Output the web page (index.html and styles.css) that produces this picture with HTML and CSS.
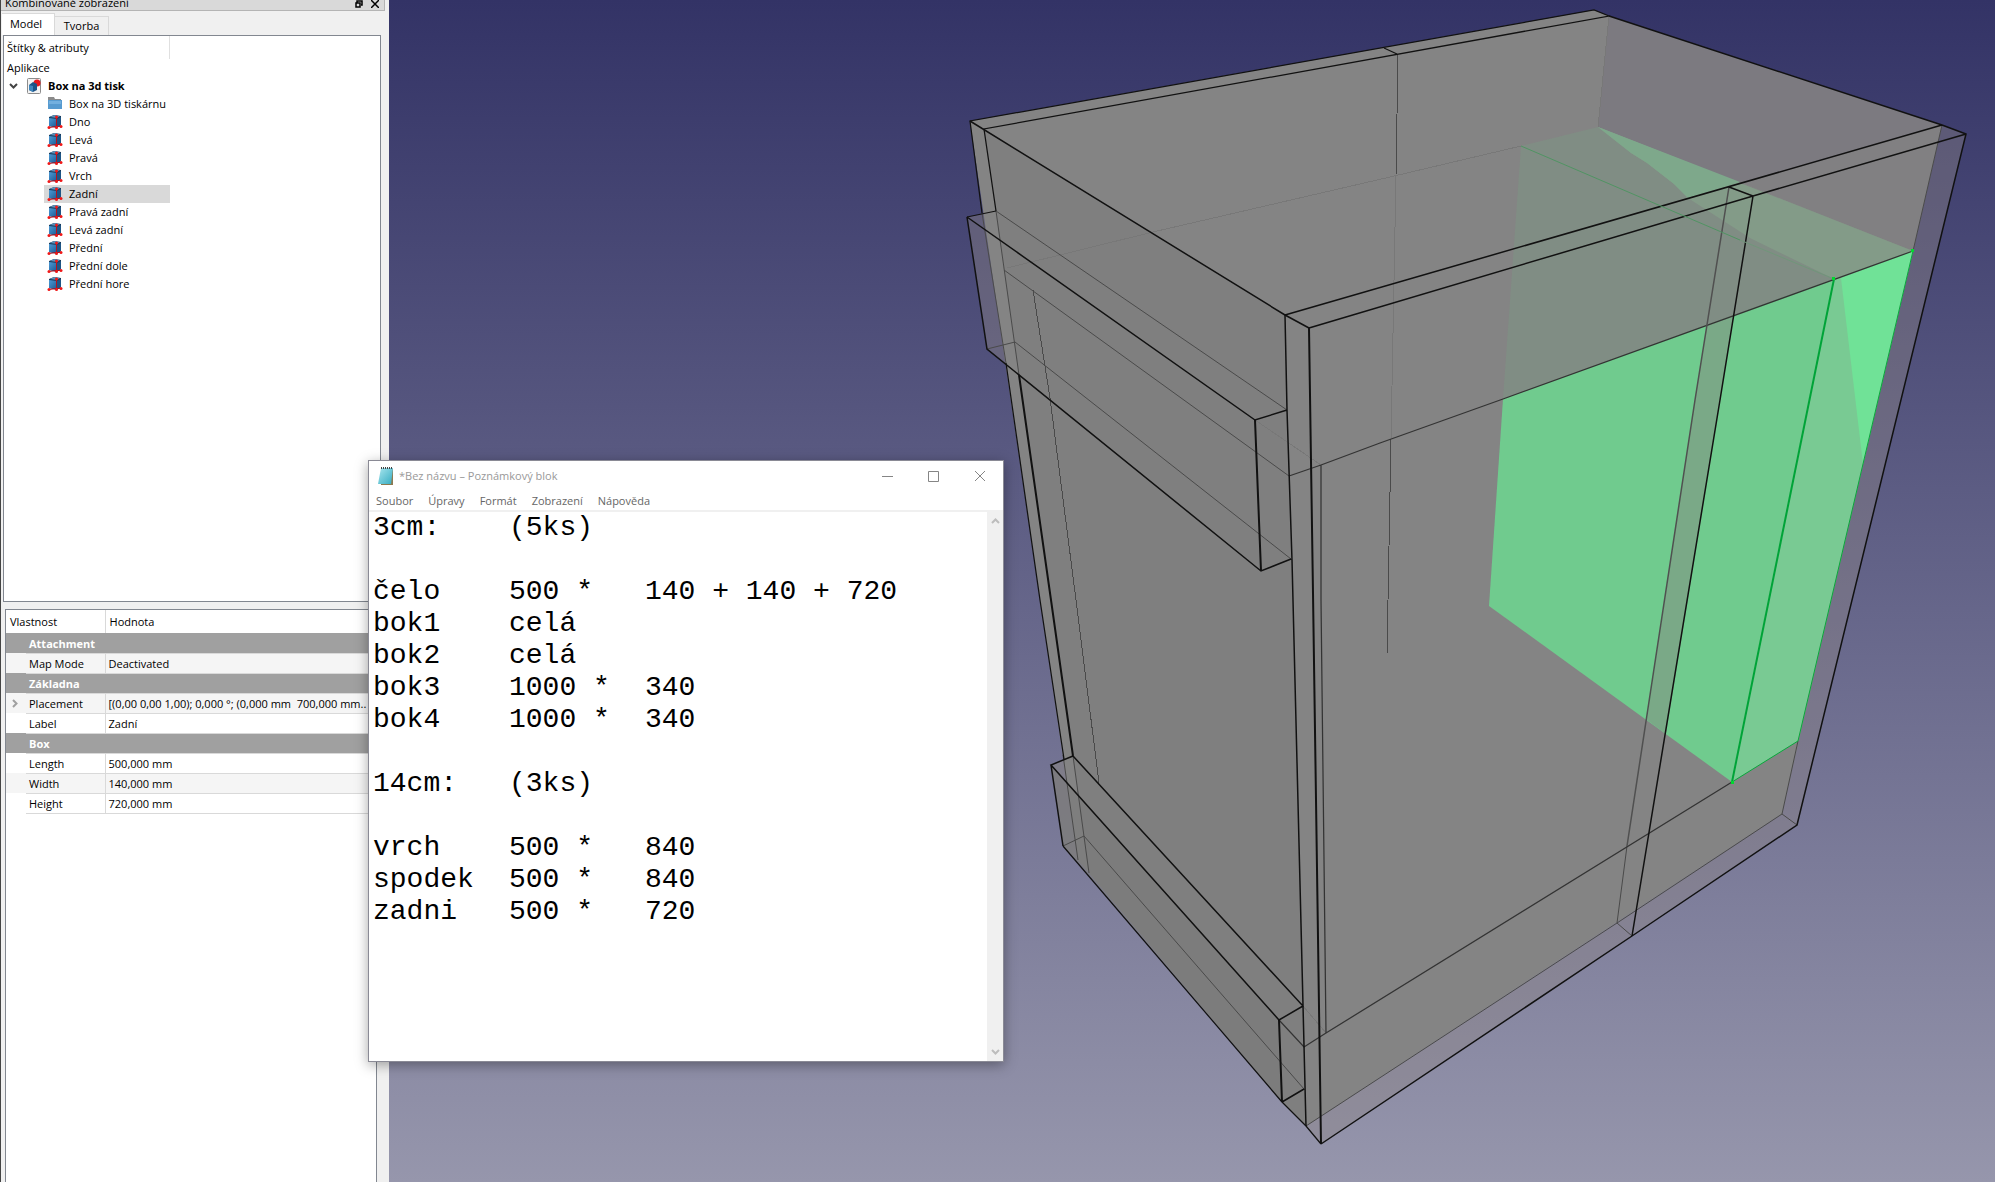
FILE: index.html
```html
<!DOCTYPE html>
<html lang="cs">
<head>
<meta charset="utf-8">
<title>Box na 3d tisk</title>
<link rel="stylesheet" href="styles.css">
</head>
<body>
<svg class="defs" aria-hidden="true">
  <defs>
    <linearGradient id="face" x1="0" y1="0" x2="1" y2="1"><stop offset="0" stop-color="#4c9ad6"/><stop offset="1" stop-color="#1b5a94"/></linearGradient>
    <linearGradient id="pad" x1="0" y1="0" x2="1" y2="1"><stop offset="0" stop-color="#a9e6ee"/><stop offset="1" stop-color="#35acc2"/></linearGradient>
    <symbol id="cube" viewBox="0 0 16 16">
      <path d="M2 3 7 1 14 2 14 11 10 14 2 12Z" fill="#173b5c"/>
      <path d="M2 4 10 5 10 13 2 12Z" fill="url(#face)"/>
      <path d="M3 3 7 1 13 2 10 4Z" fill="#5c8fb8"/>
      <path d="M10 5 14 3 14 11 10 13Z" fill="#1f5585"/>
      <path d="M9.500 3V12.500M2 13.500 9.500 12.500 14 12.500" stroke="#b3121f" stroke-width="1" fill="none"/>
      <g fill="#f01818"><circle cx="9.500" cy="3" r="1.500"/><circle cx="2" cy="13.500" r="1.500"/><circle cx="9.500" cy="13.500" r="1.500"/><circle cx="14" cy="12.500" r="1.500"/></g>
    </symbol>
    <symbol id="folder" viewBox="0 0 16 16">
      <path d="M1 1H7L8 3H14V7H1Z" fill="#8b8b8b"/>
      <path d="M1 4H15V13H1Z" fill="#579bd0"/><path d="M2 5H14V8H2Z" fill="#73b0df"/>
    </symbol>
    <symbol id="doc" viewBox="0 0 16 16">
      <rect x="1.500" y=".5" width="13" height="15" rx="1" fill="#f3f3f3" stroke="#8c8c8c"/>
      <circle cx="11" cy="5" r="3.500" fill="#e8161d"/>
      <path d="M3 7 7 4 11 6V12L7 14 3 12Z" fill="#1c5387"/><path d="M3 7 7 8V14L3 12Z" fill="#3f86bd"/>
    </symbol>
  </defs>
</svg>
<div class="app">
  <aside class="dock">
    <header class="dock-title">
      <span>Kombinované zobrazení</span>
      <button class="mini" aria-label="Plovoucí"><svg viewBox="0 0 8 8"><path d="M2 3V1H7V5H6M1 3H5V7H1Z" fill="none" stroke="#000" stroke-width="1.500"/></svg></button>
      <button class="mini" aria-label="Zavřít panel"><svg viewBox="0 0 8 8"><path d="M0 0 8 8M8 0 0 8" stroke="#000" stroke-width="1.500"/></svg></button>
    </header>
    <nav class="tabs"><button class="tab active">Model</button><button class="tab">Tvorba</button></nav>
    <section class="tree">
      <div class="tree-head">Štítky &amp; atributy</div>
      <div class="tree-app">Aplikace</div>
      <div class="root"><svg class="chevron" viewBox="0 0 9 6"><path d="M1 1 4.500 4.500 8 1" fill="none" stroke="#444" stroke-width="2"/></svg><svg class="icon"><use href="#doc"/></svg><b>Box na 3d tisk</b></div>
      <ul class="items">
        <li><svg class="icon"><use href="#folder"/></svg>Box na 3D tiskárnu</li>
        <li><svg class="icon"><use href="#cube"/></svg>Dno</li>
        <li><svg class="icon"><use href="#cube"/></svg>Levá</li>
        <li><svg class="icon"><use href="#cube"/></svg>Pravá</li>
        <li><svg class="icon"><use href="#cube"/></svg>Vrch</li>
        <li class="selected"><svg class="icon"><use href="#cube"/></svg>Zadní</li>
        <li><svg class="icon"><use href="#cube"/></svg>Pravá zadní</li>
        <li><svg class="icon"><use href="#cube"/></svg>Levá zadní</li>
        <li><svg class="icon"><use href="#cube"/></svg>Přední</li>
        <li><svg class="icon"><use href="#cube"/></svg>Přední dole</li>
        <li><svg class="icon"><use href="#cube"/></svg>Přední hore</li>
      </ul>
    </section>
    <section class="props">
      <table>
        <colgroup><col class="c-mark"><col class="c-name"><col></colgroup>
        <thead><tr><th colspan="2">Vlastnost</th><th>Hodnota</th></tr></thead>
        <tbody>
          <tr class="group"><td></td><th colspan="2">Attachment</th></tr>
          <tr class="alt"><td></td><td>Map Mode</td><td>Deactivated</td></tr>
          <tr class="group"><td></td><th colspan="2">Základna</th></tr>
          <tr class="alt"><td><svg class="expand" viewBox="0 0 6 9"><path d="M1 1 4.500 4.500 1 8" fill="none" stroke="#a0a0a0" stroke-width="2"/></svg></td><td>Placement</td><td>[(0,00 0,00 1,00); 0,000 °; (0,000 mm&nbsp; 700,000 mm..</td></tr>
          <tr><td></td><td>Label</td><td>Zadní</td></tr>
          <tr class="group"><td></td><th colspan="2">Box</th></tr>
          <tr><td></td><td>Length</td><td>500,000 mm</td></tr>
          <tr class="alt"><td></td><td>Width</td><td>140,000 mm</td></tr>
          <tr><td></td><td>Height</td><td>720,000 mm</td></tr>
        </tbody>
      </table>
    </section>
  </aside>
  <main class="view">
    <svg class="scene" viewBox="389 0 1606 1182" preserveAspectRatio="xMinYMin meet" role="img" aria-label="Průhledný model boxu">
      <clipPath id="inner"><path d="M967 217 1000 205 1310 400V1140L1060 850 980 349Z"/></clipPath>
      <!-- translucent outer boards -->
      <path fill="#8b8584" fill-opacity=".4" d="M1942 125 1966 134 1797 825 1321 1144 1306 1126 1782 814ZM967 217 996 211 1019 375 987 349ZM1051 765 1073 756 1089 873 1063 846Z"/>
      <path fill="#848484" d="M970 121 1594 10 1609 16 1942 125 1913 251 1782 814 1306 1126 1078 860 1040 600Z"/>
      <path fill="#7f7f7f" d="M984 129 1285 315 1306 1126 1282 1102 1089 873 1051 600Z"/>
      <path fill="#848484" d="M1063 846 1051 765 1073 756 1089 873Z" opacity=".35"/>
      <path fill="#7a7a7a" d="M1051 765 1279 1020 1282 1102 1063 846Z" opacity=".6"/>
      <path fill="#848484" d="M1285 315 1309 328 1320 1117 1306 1126Z"/>
      <path fill="#7c7a80" d="M1609 16 1942 125 1729 187 1598 127Z"/>
      <path fill="#818082" d="M1729 187 1942 125 1913 251 1740 182Z"/>
      <!-- selected board -->
      <path fill="#808d84" d="M1521 146 1598 127 1913 251 1834 279 1503 399Z"/>
      <path fill="#839b88" d="M1598 127 1631 153 1647 163 1674 184 1688 198 1750 238 1834 279 1913 251Z"/>
      <path fill="#7ea88b" d="M1598 127 1631 153 1647 163 1674 184 1688 198 1740 182Z"/>
      <path fill="#70cb8e" d="M1503 399 1834 279 1732 782 1489 606Z"/>
      <path fill="#79ca93" d="M1834 279 1913 251 1798 741 1732 782Z"/>
      <path fill="#70e297" d="M1841 278 1913 251 1863 464Z"/>
      <path fill="#7aa987" d="M1707 325 1734 315 1720 400 1666 734 1647 720 1695 400Z"/>
      <g fill="none">
        <g stroke="#787878" shape-rendering="crispEdges"><path d="M1007 268 1153 232 1390 177 1521 146M1609 16 1598 127M1396 175 1391 439M1255 420 1321 465M1303 1006 1326 1033"/></g>
        <g stroke="#4a4a4a">
          <path shape-rendering="crispEdges" d="M1398 54 1396 175M1391 439 1387 654M1033 290 1050 398 1076 600 1099 783"/>
          <path d="M1004 270 1289 476M1063 755 1078 860M996 211 1019 375M1073 756 1089 873M996 211 1287 410M1015 342 1291 559M987 349 1015 342M1084 836 1304 1089M1063 846 1084 836"/>
          <path d="M982 213 1006 363" clip-path="url(#inner)"/>
          <path d="M1942 125 1913 251M1798 741 1782 814 1797 825M1782 814 1617 923 1306 1126M1627 846 1617 923 1632 936"/>
        </g>
        <g stroke="#333"><path d="M1913 251 1503 399 1380 443 1321 465 1289 476M1732 782 1326 1033 1304 1047 1279 1020M1321 465V600L1326 1033" stroke-width="1.250"/></g>
        <path d="M1729 187 1695 400 1627 846" stroke="#505050" stroke-width="1.500"/>
        <g stroke="#111" stroke-width="1.250">
          <path d="M982 213 970 121 1594 10 1609 16 984 129 996 211M1006 363 1040 600 1064 759M1384 48 1397 54"/>
          <path d="M1063 846 1282 1102 1306 1126 1321 1144M967 217 996 211"/>
        </g>
        <g stroke="#111" stroke-width="1.500">
          <path d="M970 121 1285 315 1309 328M1609 16 1942 125 1966 134 1797 825 1632 936 1321 1144M1285 315 1942 125M1309 328 1753 196 1966 134M1729 187 1753 196 1720 400 1632 936"/>
          <path stroke-width="2" d="M1309 328 1310 395 1313 593 1321 1144M1255 420 1261 571M1279 1020 1282 1102M1019 375 1051 600 1073 756"/>
          <path d="M1285 315 1287 410 1292 560 1303 1005 1306 1126M967 217 1255 420 1287 410M967 217 987 349 1261 571 1291 559M1073 756 1303 1006 1279 1020 1051 765 1073 756M1051 765 1063 846M1282 1102 1304 1089"/>
        </g>
        <path d="M1521 146 1740 240" stroke="#509463"/><path d="M1740 240 1834 279" stroke="#70967a"/>
        <path d="M1913 251 1798 741 1732 782" stroke="#0aa63c"/>
        <path d="M1834 279 1732 782" stroke="#00a338" stroke-width="2"/>
      </g>
      <g fill="#00d92f"><rect x="1832" y="277" width="3" height="3"/><rect x="1911" y="249" width="3" height="3"/><rect x="1731" y="781" width="3" height="3"/></g>
    </svg>
  </main>
</div>
<section class="notepad">
  <header class="np-title">
    <svg class="np-icon" viewBox="0 0 16 20"><path d="M3 3 15 3 15 19 3 19Z" fill="#8b7a52"/><path d="M3 2H15L13 18H0Z" fill="url(#pad)"/><path d="M3 2H15" stroke="#444" stroke-width="2" stroke-dasharray="1 1"/></svg>
    <span class="np-name">*Bez názvu – Poznámkový blok</span>
    <button aria-label="Minimalizovat"><svg viewBox="0 0 12 12"><path d="M0 6.500H11" stroke="#858585"/></svg></button>
    <button aria-label="Maximalizovat"><svg viewBox="0 0 12 12"><path d="M.5 1.500H10.500V11.500H.5Z" fill="none" stroke="#858585"/></svg></button>
    <button aria-label="Zavřít"><svg viewBox="0 0 12 12"><path d="M1 1 11 11M11 1 1 11" stroke="#858585"/></svg></button>
  </header>
  <nav class="np-menu"><button>Soubor</button><button>Úpravy</button><button>Formát</button><button>Zobrazení</button><button>Nápověda</button></nav>
  <div class="np-body">
    <textarea aria-label="Text poznámky" spellcheck="false">3cm:	(5ks)

čelo	500 *	140 + 140 + 720
bok1	celá
bok2	celá
bok3	1000 *	340
bok4	1000 *	340

14cm:	(3ks)

vrch	500 *	840
spodek	500 *	840
zadni	500 *	720</textarea>
    <div class="np-scroll"><svg viewBox="0 0 9 6"><path d="M1 5 4.500 1.500 8 5" fill="none" stroke="#bdbdbd" stroke-width="2"/></svg><svg viewBox="0 0 9 6"><path d="M1 1 4.500 4.500 8 1" fill="none" stroke="#bdbdbd" stroke-width="2"/></svg></div>
  </div>
</section>
</body>
</html>
```
FILE: styles.css
```css
* { box-sizing: border-box; }
body { margin: 0; overflow: hidden; font: 11px/18px "Open Sans", "Noto Sans", sans-serif; color: #000; }
button { margin: 0; padding: 0; border: 0; background: none; font: inherit; color: inherit; }
.defs { position: absolute; width: 0; height: 0; }
.app { display: flex; height: 100vh; }

.dock { flex: 0 0 389px; display: flex; flex-direction: column; background: #f0f0f0; border-left: 1px solid #444; overflow: hidden; }
.dock-title { flex: none; display: flex; align-items: flex-end; gap: 8px; height: 11px; margin-right: 4px; padding: 0 5px 0 4px; background: #d9d9d9; border: solid #b4b4b4; border-width: 0 1px 1px 0; line-height: 14px; }
.dock-title span { flex: 1; }
.mini { height: 12px; line-height: 0; }
.mini svg { width: 8px; height: 8px; }
.tabs { flex: none; display: flex; align-items: flex-end; height: 24px; padding: 2px 0 0 1px; }
.tab { width: 54px; height: 19px; border: solid #d9d9d9; border-width: 1px 1px 0 0; }
.tab.active { width: 53px; height: 22px; padding: 0 4px 2px 0; background: #fff; }

.tree { flex: 0 0 48vh; margin: 0 8px 0 2px; background: #fff; border: 1px solid #828790; overflow: hidden; }
.tree-head { width: 166px; height: 23px; padding-left: 3px; border-right: 1px solid #e0e0e0; line-height: 24px; }
.tree-app { padding-left: 3px; }
.root, .items li { display: flex; align-items: center; height: 18px; }
.root { gap: 6px; padding-left: 5px; }
.root .icon { margin-left: 2px; }
.chevron { width: 9px; height: 6px; }
.icon { flex: none; width: 16px; height: 16px; }
.items { width: 166px; margin: 0; padding: 0 0 0 40px; list-style: none; }
.items li { gap: 6px; padding-left: 3px; white-space: nowrap; }
.items .selected { background: #d9d9d9; }

.props { flex: 1; margin: 7px 12px 0 4px; background: #fff; border: solid #828790; border-width: 1px 1px 0; overflow: hidden; }
.props table { width: 100%; table-layout: fixed; border-collapse: collapse; }
.c-mark { width: 20px; }
.c-name { width: 79px; }
.props td, .props th { height: 20px; padding: 0 3px; border: solid #d9d9d9; border-width: 0 0 1px; font-weight: 400; line-height: 19px; text-align: left; white-space: nowrap; overflow: hidden; }
.props thead th { height: 23px; padding: 0 4px; border-bottom: 0; }
.props thead th:last-child, .props td:last-child { border-left: 1px solid #d9d9d9; }
.props tbody td:first-child { padding: 0 0 0 6px; border-bottom: 0; line-height: 0; }
.props .group { background: #a0a0a0; color: #fff; }
.props .group th { font-weight: 700; }
.props .alt { background: #f5f5f5; }
.expand { width: 6px; height: 9px; }

.view { flex: 1; min-width: 0; background: linear-gradient(#333366, #9696ac); overflow: hidden; }
.scene { display: block; width: 100%; height: auto; }

.notepad { position: absolute; left: 368px; top: 460px; width: 636px; height: 602px; display: flex; flex-direction: column; background: #fff; border: 1px solid #8a8a95; box-shadow: 0 3px 12px rgba(0, 0, 0, .35); color: #666; }
.np-title { display: flex; align-items: center; height: 29px; padding-left: 9px; color: #999; }
.np-icon { width: 16px; height: 20px; margin-right: 5px; }
.np-name { flex: 1; }
.np-title button { width: 46px; height: 29px; line-height: 0; }
.np-title button svg { width: 12px; height: 12px; }
.np-menu { display: flex; gap: 15px; height: 22px; padding: 2px 0 0 7px; border-bottom: 2px solid #f0f0f0; }
.np-body { flex: 1; display: flex; min-height: 0; }
.np-body textarea { flex: 1; min-width: 0; margin: 0; padding: 0 0 0 4px; border: 0; outline: 0; resize: none; overflow: hidden; white-space: pre; tab-size: 136px; font: 28px/32px "Liberation Mono", monospace; color: #000; }
.np-scroll { display: flex; flex-direction: column; justify-content: space-between; align-items: center; width: 16px; padding: 6px 0; background: #f0f0f0; }
.np-scroll svg { width: 9px; height: 6px; }
```
